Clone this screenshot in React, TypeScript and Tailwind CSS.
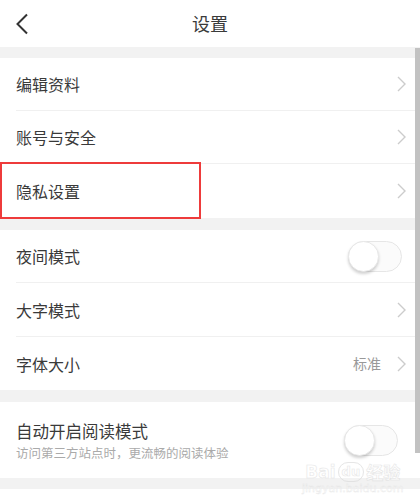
import React from "react";

const font = { fontFamily: '"Noto Sans CJK SC", "Noto Sans", sans-serif' };

function Chevron() {
  return (
    <svg width="9" height="16" viewBox="0 0 9 16" className="shrink-0">
      <polyline points="1,1 8,8 1,15" fill="none" stroke="#cccccc" strokeWidth="1.4" />
    </svg>
  );
}

function Toggle() {
  return (
    <div className="relative h-[31px] w-[54px] shrink-0 rounded-full border border-[#e6e6e6] bg-[#fbfbfb]">
      <div className="absolute -left-px -top-px h-[31px] w-[31px] rounded-full border border-[#e8e8e8] bg-white shadow-[0_2px_3px_rgba(0,0,0,0.18)]" />
    </div>
  );
}

function Row({
  label,
  h,
  divider = true,
  right,
}: {
  label: string;
  h: string;
  divider?: boolean;
  right?: React.ReactNode;
}) {
  return (
    <div className={`flex ${h} items-stretch pl-4`}>
      <div
        className={`flex flex-1 items-center justify-between pr-[14px] ${
          divider ? "border-b border-[#f0f0f0]" : ""
        }`}
      >
        <span className="text-[16px] text-[#3a3a3a]">{label}</span>
        {right ?? <Chevron />}
      </div>
    </div>
  );
}

export default function App() {
  return (
    <div className="relative h-[504px] w-[420px] overflow-hidden bg-[#f2f2f2]" style={font}>
      {/* header */}
      <div className="relative flex h-[47px] items-center justify-center bg-white">
        <svg width="14" height="22" viewBox="0 0 14 22" className="absolute left-[15px] top-[13px]">
          <polyline points="12,1.5 2.5,11 12,20.5" fill="none" stroke="#333333" strokeWidth="2" />
        </svg>
        <span className="text-[18px] text-[#3a3a3a]">设置</span>
      </div>

      <div className="mt-[11px] bg-white">
        <Row label="编辑资料" h="h-[53px]" />
        <Row label="账号与安全" h="h-[53px]" />
        <Row label="隐私设置" h="h-[54px]" divider={false} />
      </div>

      <div className="mt-[12px] bg-white">
        <Row label="夜间模式" h="h-[53px]" right={<span className="mr-[4px]"><Toggle /></span>} />
        <Row label="大字模式" h="h-[54px]" />
        <Row
          label="字体大小"
          h="h-[53px]"
          divider={false}
          right={
            <div className="flex items-center gap-[16px]">
              <span className="text-[14px] text-[#999999]">标准</span>
              <Chevron />
            </div>
          }
        />
      </div>

      <div className="mt-[12px] flex h-[76px] items-center justify-between bg-white pl-4 pr-[22px]">
        <div className="flex flex-col">
          <span className="text-[16.5px] leading-[24px] text-[#3a3a3a]">自动开启阅读模式</span>
          <span className="mt-[1px] text-[12.5px] leading-[18px] text-[#aaaaaa]">
            访问第三方站点时，更流畅的阅读体验
          </span>
        </div>
        <Toggle />
      </div>

      <div className="mt-[11px] h-[20px] bg-white" />

      {/* red highlight box */}
      <div className="absolute left-0 top-[162px] h-[57px] w-[201px] border-2 border-[#ee3b3b]" />

      {/* scrollbar */}
      <div className="absolute right-0 top-[48px] h-[405px] w-[5px] bg-[#c2c2c2]" />

      {/* watermark */}
      <div className="absolute left-[302px] top-[462px] flex flex-col items-center opacity-70" style={{ fontFamily: '"DejaVu Sans", sans-serif' }}>
        <div className="flex items-center gap-[2px] text-[17px] font-bold leading-[18px] text-white [-webkit-text-stroke:0.6px_#dcdcdc]">
          <span>Bai</span>
          <span className="rounded-full border border-[#dcdcdc] px-[3px] text-[13px]">du</span>
          <span style={font}>经验</span>
        </div>
        <span className="text-[11px] leading-[14px] text-white [-webkit-text-stroke:0.4px_#e0e0e0]">
          jingyan.baidu.com
        </span>
      </div>
    </div>
  );
}
